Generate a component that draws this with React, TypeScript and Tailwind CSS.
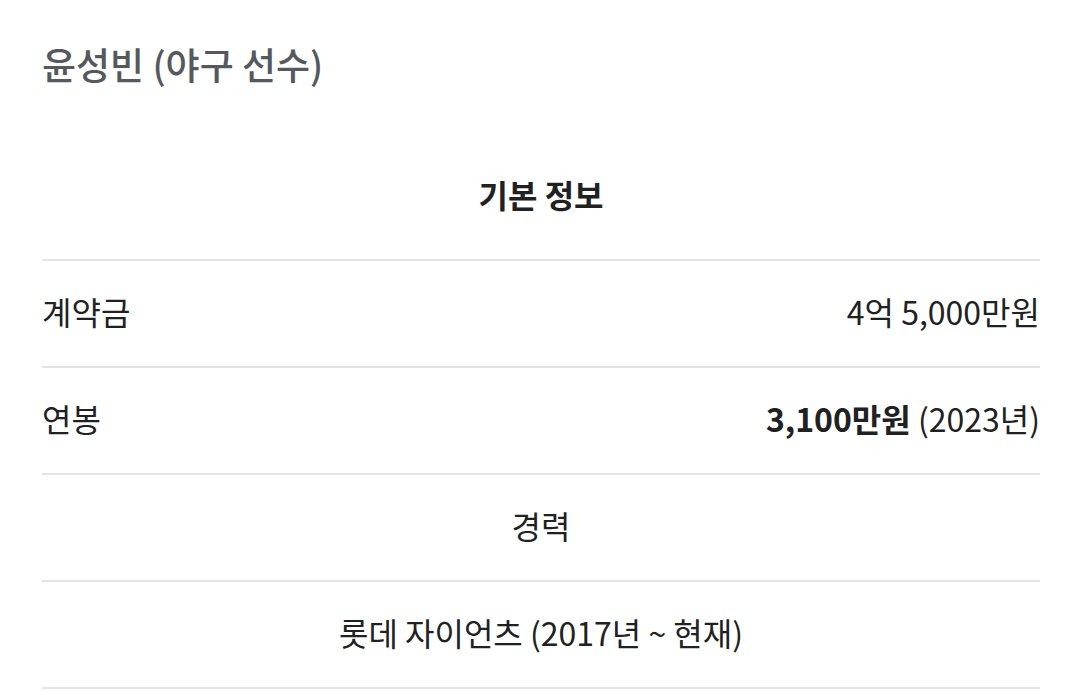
import React from "react";

const font = { fontFamily: '"Noto Sans CJK KR", "Noto Sans", sans-serif' };

export default function App() {
  return (
    <div className="w-[1080px] h-[692px] bg-white overflow-hidden pl-[42px] pr-[40px]" style={font}>
      <h1 className="h-[134px] pt-[40px] text-[37px] leading-[48px] text-[#54595d] font-medium">
        윤성빈 (야구 선수)
      </h1>
      <div className="flex flex-col text-[32px] text-[#202122]">
        <div className="h-[127px] flex items-center justify-center font-bold border-b-2 border-[#e4e4e4] pb-[6px]">
          기본 정보
        </div>
        <div className="h-[107px] flex items-center justify-between border-b-2 border-[#e4e4e4] pb-[6px]">
          <span>계약금</span>
          <span>4억 5,000만원</span>
        </div>
        <div className="h-[107px] flex items-center justify-between border-b-2 border-[#e4e4e4] pb-[6px]">
          <span>연봉</span>
          <span>
            <b className="font-bold">3,100만원</b> (2023년)
          </span>
        </div>
        <div className="h-[107px] flex items-center justify-center border-b-2 border-[#e4e4e4] pb-[6px]">
          경력
        </div>
        <div className="h-[107px] flex items-center justify-center border-b-2 border-[#e4e4e4] pb-[6px]">
          롯데 자이언츠 (2017년 ~ 현재)
        </div>
      </div>
    </div>
  );
}
